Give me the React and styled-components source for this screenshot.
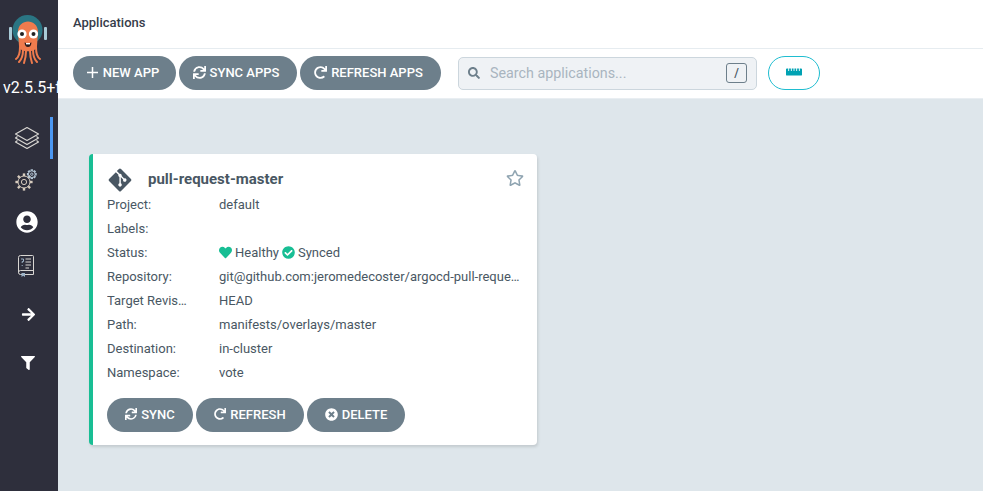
import React from "react";
import styled, { createGlobalStyle } from "styled-components";
import {
  FaArrowRight,
  FaCheckCircle,
  FaFilter,
  FaGitAlt,
  FaHeart,
  FaRedo,
  FaRegStar,
  FaRulerHorizontal,
  FaSearch,
  FaSync,
  FaTimesCircle,
  FaUserCircle,
} from "react-icons/fa";

const GlobalStyle = createGlobalStyle`
  html, body {
    margin: 0;
    padding: 0;
    height: 100%;
    overflow: hidden;
    font-family: Roboto, "Liberation Sans", sans-serif;
  }
  * { box-sizing: border-box; }
`;

const Page = styled.div`
  display: flex;
  width: 983px;
  height: 491px;
  overflow: hidden;
  background: #dee6eb;
`;

const Sidebar = styled.nav`
  width: 58px;
  flex: none;
  background: #2e2f3c;
  display: flex;
  flex-direction: column;
  align-items: stretch;
  overflow: hidden;
`;

const LogoWrap = styled.div`
  height: 78px;
  padding-top: 14px;
  padding-left: 9px;
`;

const Version = styled.div`
  color: #fff;
  font-size: 16px;
  line-height: 20px;
  white-space: nowrap;
  padding-left: 3px;
  height: 20px;
  margin-bottom: 19px;
`;

const NavItem = styled.div`
  height: ${({ $height = 42 }) => $height}px;
  display: flex;
  align-items: center;
  justify-content: flex-start;
  padding-left: ${({ $left = 14 }) => $left}px;
  color: #fff;
  border-right: 3px solid ${({ $active }) => ($active ? "#4b97f2" : "transparent")};
  margin-right: 5px;
`;

const Main = styled.div`
  flex: 1;
  display: flex;
  flex-direction: column;
  min-width: 0;
`;

const TitleBar = styled.header`
  height: 49px;
  background: #fff;
  border-bottom: 1px solid #e6ecf0;
  display: flex;
  align-items: center;
  padding: 0 15px 3px;
  font-size: 13px;
  font-weight: 500;
  color: #363c4a;
`;

const Toolbar = styled.div`
  height: 50px;
  background: #fff;
  border-bottom: 1px solid #e9eef2;
  display: flex;
  align-items: flex-start;
  padding: 7px 0 0 15px;
`;

const Button = styled.button`
  height: 34px;
  width: ${({ $width }) => $width}px;
  margin-right: 3px;
  padding: 0 ${({ $trail = 0 }) => $trail}px 2px 0;
  border: 0;
  border-radius: 17px;
  background: #6d7f8b;
  color: #fff;
  font-family: inherit;
  font-size: 13px;
  font-weight: 500;
  display: flex;
  align-items: center;
  justify-content: center;
  gap: 4px;
  white-space: nowrap;
  svg { flex: none; }
`;

const SearchBox = styled.div`
  width: 299px;
  height: 33px;
  margin: 1px 11px 0 14px;
  background: #eff2f5;
  border: 1px solid #ccd6dd;
  border-radius: 5px;
  display: flex;
  align-items: center;
  padding: 0 9px 1px 9px;
  color: #6d7f8b;
`;

const SearchText = styled.span`
  flex: 1;
  margin-left: 10px;
  font-size: 14.3px;
  color: #a9b5bf;
`;

const KeyHint = styled.span`
  width: 21px;
  height: 20px;
  border: 1px solid #6d7f8b;
  border-radius: 3px;
  display: flex;
  align-items: center;
  justify-content: center;
  font-size: 12px;
  font-weight: 500;
  color: #495763;
`;

const RulerButton = styled.button`
  width: 52px;
  height: 34px;
  padding: 0 0 3px;
  border: 1px solid #1fbdd0;
  border-radius: 17px;
  background: #fff;
  color: #00a2b3;
  display: flex;
  align-items: center;
  justify-content: center;
`;

const Content = styled.main`
  flex: 1;
  padding: 55px 0 0 31px;
`;

const Card = styled.article`
  width: 448px;
  height: 291px;
  background: #fff;
  border-left: 4px solid #18be94;
  border-radius: 4px;
  box-shadow: 1px 2px 3px rgba(0, 0, 0, 0.12);
  padding: 13px 14px 0;
`;

const CardHeader = styled.div`
  display: flex;
  align-items: center;
  height: 25px;
  color: #495763;
`;

const CardTitle = styled.h2`
  flex: 1;
  margin: 0 0 0 15px;
  font-size: 15px;
  line-height: 25px;
  font-weight: 700;
  color: #495763;
`;

const StarIcon = styled(FaRegStar)`
  color: #8fa4b1;
  margin: -3px -1px 0 0;
`;

const Row = styled.div`
  display: flex;
  height: 24px;
  align-items: center;
  font-size: 13px;
  color: #495763;
`;

const RowLabel = styled.div`
  width: 112px;
  flex: none;
  padding-right: 32px;
  white-space: nowrap;
  overflow: hidden;
  text-overflow: ellipsis;
`;

const RowValue = styled.div`
  flex: 1;
  min-width: 0;
  display: flex;
  align-items: center;
  gap: 3px;
  white-space: nowrap;
  overflow: hidden;
  svg { flex: none; color: #18be94; }
`;

const Ellipsed = styled.span`
  display: block;
  min-width: 0;
  padding-right: 2px;
  overflow: hidden;
  text-overflow: ellipsis;
`;

const CardActions = styled.div`
  display: flex;
  margin-top: 14px;
`;

const PlusIcon = () => (
  <svg width="13" height="13" viewBox="0 0 13 13" stroke="currentColor" strokeWidth="1.5">
    <path d="M6.5 1 V12 M1 6.5 H12" />
  </svg>
);

const ArgoLogo = () => (
  <svg width="38" height="50" viewBox="0 0 38 50">
    <circle cx="18.5" cy="16" r="15" fill="#2a7583" />
    <rect x="0" y="13" width="3" height="13" rx="1" fill="#a9cbd8" />
    <rect x="35" y="13" width="3" height="13" rx="1" fill="#a9cbd8" />
    <path d="M9 18 C9 4 29 4 29 18 L28 32 C28 39 10 39 10 32 Z" fill="#ef7b4d" />
    <path
      d="M11 33 C11 40 10 43 7 45 M14 36 C14 42 12 46 10 48 M17 37 C17 43 16 46 15 49 M21 37 C21 43 22 46 23 49 M24 36 C24 42 26 46 28 48 M27 33 C27 40 28 43 31 45"
      stroke="#ef7b4d"
      strokeWidth="2"
      fill="none"
      strokeLinecap="round"
    />
    <circle cx="13" cy="20" r="4.6" fill="#fff" />
    <circle cx="24.5" cy="20" r="4.6" fill="#fff" />
    <circle cx="13" cy="20" r="2" fill="#222" />
    <circle cx="24.5" cy="20" r="2" fill="#222" />
    <path d="M15.5 28.5 Q19 30 22.5 28.5 Q22 33 19 33 Q16 33 15.5 28.5 Z" fill="#2b1b1b" />
    <rect x="17" y="29" width="4" height="1.4" fill="#fff" />
  </svg>
);

const LayersIcon = () => (
  <svg width="26" height="24" viewBox="0 0 26 24" fill="none" stroke="#d8d6d2" strokeWidth="1.2" strokeLinejoin="round">
    <path d="M13 1.5 L24.5 8 L13 14.5 L1.5 8 Z" />
    <path d="M3.5 10.6 L1.5 12 L13 18.5 L24.5 12 L22.5 10.6" />
    <path d="M3.5 14.6 L1.5 16 L13 22.5 L24.5 16 L22.5 14.6" />
  </svg>
);

const gearTeeth = (cx, cy, r, count, len) =>
  Array.from({ length: count }, (_, i) => {
    const angle = (i * 2 * Math.PI) / count;
    return (
      <line
        key={i}
        x1={cx + Math.cos(angle) * r}
        y1={cy + Math.sin(angle) * r}
        x2={cx + Math.cos(angle) * (r + len)}
        y2={cy + Math.sin(angle) * (r + len)}
        strokeWidth="2.4"
      />
    );
  });

const GearsIcon = () => (
  <svg width="22" height="22" viewBox="0 0 22 22" fill="none" stroke="#d8cdbf" strokeWidth="1">
    <circle cx="9" cy="13" r="6" />
    <circle cx="9" cy="13" r="2.6" />
    {gearTeeth(9, 13, 6, 8, 2.6)}
    <circle cx="16.8" cy="5.2" r="3.4" stroke="#b4c6d6" />
    <circle cx="16.8" cy="5.2" r="1.2" stroke="#b4c6d6" />
    <g stroke="#b4c6d6">{gearTeeth(16.8, 5.2, 3.4, 8, 1.5)}</g>
  </svg>
);

const DocsIcon = () => (
  <svg width="16" height="22" viewBox="0 0 16 22" fill="none" stroke="#d8d6d2" strokeWidth="1">
    <path d="M2.5 .5 H14.5 A1 1 0 0 1 15.5 1.5 V19.5 H2.5 A2 2 0 0 1 .5 17.5 V2.5 A2 2 0 0 1 2.5 .5 Z" />
    <path d="M.5 17.5 A2 2 0 0 1 2.5 15.5 H15.5" />
    <path d="M3.5 18 H7 V22 L5.2 20.8 L3.5 22 Z" fill="#9db4c8" stroke="none" />
    <path d="M3 4 H5.5 V6.5 H4.2 V8 M4.2 10 V11" stroke="#9db4c8" />
    <path d="M7.5 4 H13 M7.5 7 H13 M7.5 10 H13 M7.5 13 H11" />
  </svg>
);

const rows = [
  { label: "Project:", value: "default" },
  { label: "Labels:", value: "" },
  { label: "Status:", status: true },
  { label: "Repository:", value: "git@github.com:jeromedecoster/argocd-pull-request.git" },
  { label: "Target Revision:", value: "HEAD" },
  { label: "Path:", value: "manifests/overlays/master" },
  { label: "Destination:", value: "in-cluster" },
  { label: "Namespace:", value: "vote" },
];

const App = () => {
  return (
    <Page>
      <GlobalStyle />
      <Sidebar>
        <LogoWrap>
          <ArgoLogo />
        </LogoWrap>
        <Version>v2.5.5+fc3eaec</Version>
        <NavItem $active>
          <LayersIcon />
        </NavItem>
        <NavItem $left={15}>
          <GearsIcon />
        </NavItem>
        <NavItem $left={16}>
          <FaUserCircle size={22} />
        </NavItem>
        <NavItem $left={18} $height={46}>
          <DocsIcon />
        </NavItem>
        <NavItem $left={21} $height={50}>
          <FaArrowRight size={15} />
        </NavItem>
        <NavItem $left={21} $height={48}>
          <FaFilter size={14} />
        </NavItem>
      </Sidebar>
      <Main>
        <TitleBar>Applications</TitleBar>
        <Toolbar>
          <Button $width={103} $trail={4}>
            <PlusIcon /> NEW APP
          </Button>
          <Button $width={118} $trail={4}>
            <FaSync size={13} /> SYNC APPS
          </Button>
          <Button $width={141} $trail={4}>
            <FaRedo size={13} /> REFRESH APPS
          </Button>
          <SearchBox>
            <FaSearch size={12} />
            <SearchText>Search applications...</SearchText>
            <KeyHint>/</KeyHint>
          </SearchBox>
          <RulerButton>
            <FaRulerHorizontal size={16} />
          </RulerButton>
        </Toolbar>
        <Content>
          <Card>
            <CardHeader>
              <FaGitAlt size={26} />
              <CardTitle>pull-request-master</CardTitle>
              <StarIcon size={18} />
            </CardHeader>
            {rows.map((row) => (
              <Row key={row.label}>
                <RowLabel>{row.label}</RowLabel>
                <RowValue>
                  {row.status ? (
                    <>
                      <FaHeart size={13} /> Healthy
                      <FaCheckCircle size={13} /> Synced
                    </>
                  ) : (
                    <Ellipsed>{row.value}</Ellipsed>
                  )}
                </RowValue>
              </Row>
            ))}
            <CardActions>
              <Button $width={86}>
                <FaSync size={12} /> SYNC
              </Button>
              <Button $width={108}>
                <FaRedo size={12} /> REFRESH
              </Button>
              <Button $width={98}>
                <FaTimesCircle size={13} /> DELETE
              </Button>
            </CardActions>
          </Card>
        </Content>
      </Main>
    </Page>
  );
};

export default App;
